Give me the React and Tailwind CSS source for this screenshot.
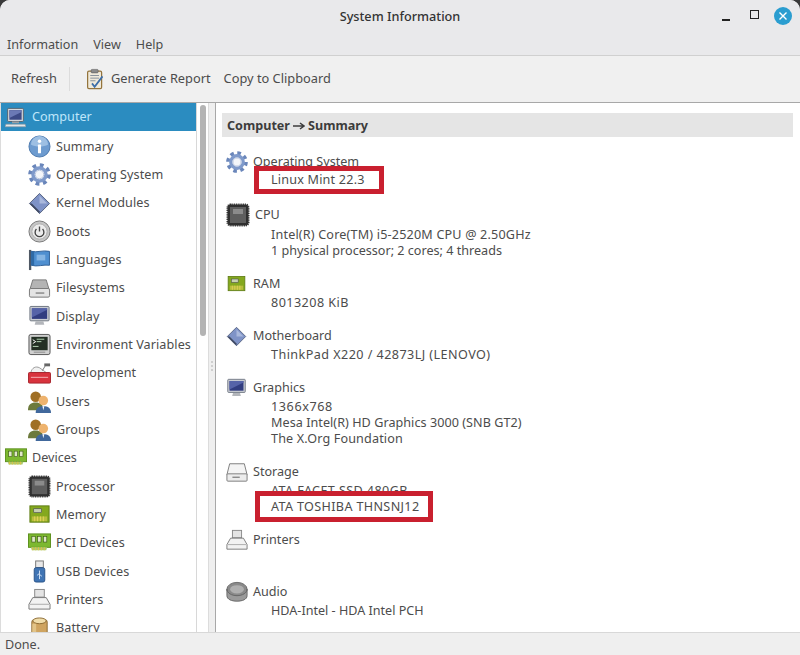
import React from 'react'

// small hand drawn hardware icons, all on a 24x24 box
const icons = {
  computer: (
    <>
      <rect x="3" y="1" width="18" height="15" rx="1" fill="#d5d8dc" stroke="#555d66" />
      <rect x="5" y="3" width="14" height="11" fill="#3d4a86" />
      <path d="M5 12 L19 5 V3 H5z" fill="#6b79b5" />
      <rect x="8" y="16" width="8" height="2" fill="#9aa0a6" />
      <path d="M1 19h22l1 3H0z" fill="#e4e6e8" stroke="#8a9097" strokeWidth=".7" />
    </>
  ),
  info: (
    <>
      <circle cx="12" cy="12" r="11" fill="#6d9bcf" stroke="#4b78ac" />
      <path d="M3 10a9 9 0 0 1 18 0c-5 3-13 3-18 0z" fill="#9dbfe3" />
      <circle cx="12" cy="6.5" r="1.8" fill="#fff" />
      <rect x="10.4" y="10" width="3.2" height="9" rx=".6" fill="#fff" />
    </>
  ),
  gear: (
    <>
      <circle cx="12" cy="12" r="9.8" fill="none" stroke="#6a86ba" strokeWidth="4" strokeDasharray="3.9 3.8" />
      <circle cx="12" cy="12" r="6.8" fill="none" stroke="#7f9acb" strokeWidth="3.6" />
      <circle cx="12" cy="12" r="4.4" fill="#f4f6fa" stroke="#b6c3dc" />
    </>
  ),
  kernel: (
    <>
      <path d="M12 1.5 L22.5 12 L12 22.5 L1.5 12z" fill="#7f93c7" stroke="#55617f" />
      <path d="M12 4 L20 12 L12 12z" fill="#a9b8dc" />
      <path d="M1.5 12 L12 22.5 L12 20 L4 12z" fill="#3f4a63" />
    </>
  ),
  boots: (
    <>
      <circle cx="12" cy="12" r="11" fill="#c6c6c6" stroke="#777" />
      <circle cx="12" cy="12" r="8" fill="#ececec" stroke="#aaa" />
      <path d="M8.8 9.5a4.6 4.6 0 1 0 6.4 0" fill="none" stroke="#444" strokeWidth="1.4" />
      <path d="M12 6.8v5.2" stroke="#444" strokeWidth="1.4" />
    </>
  ),
  flag: (
    <>
      <rect x="1" y="2" width="2.4" height="21" fill="#4f5864" />
      <path d="M3.4 3.5c6 1.5 12-1.5 19 0v14.5c-6-1-13 2-19 0z" fill="#4f8fd0" stroke="#2f5f96" />
      <path d="M3.4 3.5v14.5l3 .6V4z" fill="#2f6aa6" />
      <rect x="9" y="7" width="9" height="6" fill="#86b5e3" />
    </>
  ),
  disk: (
    <>
      <path d="M5 3h14l3 10H2z" fill="#b4b4b4" stroke="#777" />
      <rect x="1.5" y="12" width="21" height="9" rx="1.5" fill="#e4e4e4" stroke="#777" />
      <rect x="8" y="16" width="9" height="1.5" fill="#888" />
    </>
  ),
  display: (
    <>
      <rect x="2" y="1.5" width="20" height="15" rx="1" fill="#c9ccd2" stroke="#6d7480" />
      <rect x="4" y="3.5" width="16" height="11" fill="#323d80" />
      <path d="M4 13 L20 5 V3.5 H4z" fill="#5663a8" />
      <path d="M8 17h8l1 3.5H7z" fill="#b3b6bb" />
    </>
  ),
  terminal: (
    <>
      <rect x="1" y="1.5" width="22" height="21" rx="2" fill="#d0d0d0" stroke="#555" />
      <rect x="3.5" y="4" width="17" height="14" fill="#233024" />
      <path d="M5 7l3 2-3 2" fill="none" stroke="#fff" strokeWidth="1" />
      <path d="M9 6.5h8M9 9h5M5 14h6" stroke="#b8d8b8" strokeWidth="1" />
      <rect x="6" y="19.5" width="12" height="1" fill="#888" />
    </>
  ),
  dev: (
    <>
      <path d="M3 11c1-5 5-7 9-5l7 5z" fill="#f1f1f1" stroke="#999" />
      <rect x="17" y="1.5" width="6" height="3" fill="#666" />
      <path d="M18 4l-3 5" stroke="#777" />
      <rect x="0.5" y="11" width="23" height="11" rx="1" fill="#d8333d" stroke="#a7242c" />
      <path d="M3 16h18" stroke="#f6b4b8" />
    </>
  ),
  users: (
    <>
      <circle cx="8" cy="7" r="5.5" fill="#a06f24" />
      <path d="M0 21c0-6 3-8 8-8s8 2 8 8z" fill="#6c7a3c" />
      <circle cx="16" cy="11" r="5" fill="#eeb36e" />
      <path d="M8 24c0-5 3-7 8-7s8 2 8 7z" fill="#41689c" />
      <path d="M15 17h2l-1 4z" fill="#fff" />
    </>
  ),
  ram: (
    <>
      <rect x="0.5" y="2" width="23" height="14" fill="#7cb82f" stroke="#5b8f1c" />
      <rect x="4" y="4.5" width="3.6" height="6" fill="#dfe8c8" stroke="#3d5a17" strokeWidth=".7" />
      <rect x="10" y="4.5" width="3.6" height="6" fill="#dfe8c8" stroke="#3d5a17" strokeWidth=".7" />
      <rect x="16" y="4.5" width="3.6" height="6" fill="#dfe8c8" stroke="#3d5a17" strokeWidth=".7" />
      <path d="M3 16h17l-1 3H4z" fill="#a9c96a" />
      <path d="M5 16v3M8 16v3M11 16v3M14 16v3M17 16v3" stroke="#dcc04a" strokeWidth="1.2" />
    </>
  ),
  chip: (
    <>
      <rect x="1.5" y="1.5" width="21" height="21" rx="3" fill="#2f2f2f" stroke="#333" strokeDasharray="1 .8" strokeWidth="2" />
      <rect x="4" y="4" width="16" height="16" fill="#5e5e5e" />
      <rect x="7" y="6" width="10" height="5" fill="#8b8b8b" />
    </>
  ),
  memory: (
    <>
      <rect x="2" y="3" width="20" height="17" fill="#84a81e" stroke="#5f7c14" />
      <rect x="6" y="6" width="8" height="4" fill="#c7cfb0" stroke="#445" strokeWidth=".6" />
      <path d="M4 14h16v5H4z" fill="#b7bd3c" />
      <path d="M7 14v5M10 14v5M13 14v5M16 14v5" stroke="#e5d35a" />
    </>
  ),
  usb: (
    <>
      <rect x="8" y="1" width="8" height="7" fill="#e8e8e8" stroke="#777" />
      <rect x="6.5" y="8" width="11" height="15" rx="2" fill="#3f74b4" stroke="#2a5388" />
      <path d="M12 11v9M12 14l-2.5 2M12 15l2.5 2" stroke="#cfe0f3" />
    </>
  ),
  printer: (
    <>
      <rect x="7" y="1.5" width="10" height="8" fill="#e4e4e4" stroke="#888" />
      <path d="M5 10h14l4 7v5H1v-5z" fill="#f2f2f2" stroke="#777" />
      <path d="M2 17h20" stroke="#aaa" />
    </>
  ),
  battery: (
    <>
      <rect x="4" y="3" width="16" height="21" rx="2" fill="#cfa460" stroke="#8b6a32" />
      <ellipse cx="12" cy="4" rx="7" ry="3" fill="#f0ddaa" stroke="#8b6a32" />
      <rect x="4.5" y="7" width="4" height="17" fill="#e2c488" />
    </>
  ),
  storage: (
    <>
      <path d="M4 3h16l3 12H1z" fill="#f4f4f4" stroke="#777" />
      <rect x="1" y="14" width="22" height="8" rx="1" fill="#ececec" stroke="#777" />
      <rect x="7" y="17" width="8" height="1.5" fill="#888" />
    </>
  ),
  audio: (
    <>
      <ellipse cx="12" cy="9" rx="11" ry="7.5" fill="#8a8a8a" stroke="#666" />
      <ellipse cx="12" cy="9" rx="7.5" ry="4.5" fill="#b0b0b0" />
      <path d="M1 9v7c0 4 5 6 11 6s11-2 11-6V9c0 4-5 7-11 7S1 13 1 9z" fill="#9a9a9a" stroke="#666" />
    </>
  ),
  report: (
    <>
      <rect x="3" y="3" width="16" height="20" rx="1.5" fill="#efe9da" stroke="#94743c" strokeWidth="1.4" />
      <rect x="7" y="1" width="8" height="4" rx="1" fill="#8a8a8a" stroke="#555" strokeWidth=".6" />
      <path d="M6 8h10M6 11h10M6 14h6" stroke="#7d8794" />
      <path d="M8 17l3 4 9-12" fill="none" stroke="#3d6ea8" strokeWidth="2" />
    </>
  ),
}

function Icon({ name, className }) {
  return (
    <svg viewBox="0 0 24 24" className={className}>
      {icons[name]}
    </svg>
  )
}

const sidebar = [
  ['info', 'Summary'],
  ['gear', 'Operating System'],
  ['kernel', 'Kernel Modules'],
  ['boots', 'Boots'],
  ['flag', 'Languages'],
  ['disk', 'Filesystems'],
  ['display', 'Display'],
  ['terminal', 'Environment Variables'],
  ['dev', 'Development'],
  ['users', 'Users'],
  ['users', 'Groups'],
]

const deviceItems = [
  ['chip', 'Processor'],
  ['memory', 'Memory'],
  ['ram', 'PCI Devices'],
  ['usb', 'USB Devices'],
  ['printer', 'Printers'],
  ['battery', 'Battery'],
]

function TreeRow({ icon, label }) {
  return (
    <div className="flex h-[28.33px] shrink-0 items-center pl-[27px]">
      <Icon name={icon} className="h-[23px] w-[23px] shrink-0" />
      <span className="ml-[5px] whitespace-nowrap pt-px tracking-[0.08px]">{label}</span>
    </div>
  )
}

function Section({ icon, title, extra, children, iconClass = 'h-[22px] w-[22px]', tight }) {
  return (
    <div className={tight ? 'mb-[17px]' : 'mb-[15px]'}>
      <div className={tight ? 'flex h-[20px] items-center' : 'mb-px flex h-[20px] items-center'}>
        <div className="flex w-[27px] shrink-0 justify-start">
          <Icon name={icon} className={iconClass} />
        </div>
        <span className={extra}>{title}</span>
      </div>
      <div className="flex flex-col pl-[45px] leading-[16px]">{children}</div>
    </div>
  )
}

function Value({ children, className = '' }) {
  return <div className={`h-[16px] whitespace-nowrap ${className}`}>{children}</div>
}

export default function App() {
  return (
    <div className="h-[655px] w-[800px] overflow-hidden bg-[#3a3a3a] font-['Noto_Sans',sans-serif] text-[12.6px] text-[#4c4c4c]">
      <div className="flex h-full flex-col overflow-hidden rounded-t-[10px] bg-[#efefef]">
        {/* title bar + menu */}
        <div className="h-[56px] shrink-0 border-b border-[#d0d0d0] bg-[#e9e9eb]">
          <div className="relative flex h-[33px] items-center justify-center">
            <span className="text-[12.7px] font-medium text-[#333]">System Information</span>
            <div className="absolute right-[8px] top-[7px] flex items-center">
              <div className="mt-[8px] mr-[20px] h-[2px] w-[8px] bg-[#222]" />
              <div className="mr-[15px] mb-[4px] h-[9px] w-[9px] border border-[#222]" />
              <div className="flex h-[18px] w-[18px] items-center justify-center rounded-full bg-[#2a9dd0]">
                <svg viewBox="0 0 10 10" className="h-[10px] w-[10px]">
                  <path d="M1.5 1.5l7 7M8.5 1.5l-7 7" stroke="#fff" strokeWidth="1.4" />
                </svg>
              </div>
            </div>
          </div>
          <div className="flex h-[22px] items-center pl-[7px] pt-[2px]">
            <span className="mr-[15px]">Information</span>
            <span className="mr-[15px]">View</span>
            <span>Help</span>
          </div>
        </div>

        {/* toolbar */}
        <div className="flex h-[47px] shrink-0 items-center border-b border-[#a8a8a8] bg-[#f0f0f0] pl-[11px] text-[12.8px]">
          <span>Refresh</span>
          <div className="ml-[12px] h-[24px] w-px bg-[#dcdcdc]" />
          <Icon name="report" className="ml-[15px] h-[24px] w-[21px]" />
          <span className="ml-[5px]">Generate Report</span>
          <span className="ml-[13px]">Copy to Clipboard</span>
        </div>

        {/* panes */}
        <div className="flex min-h-0 flex-1">
          <div className="flex w-[209px] shrink-0 border-l border-r border-[#dcdcdc] bg-white">
            <div className="min-h-0 w-[196px] shrink-0 overflow-hidden border-r border-[#d8d8d8]">
              <div className="flex h-[28px] items-center bg-[#2b8cc0] pl-[4px] pt-px text-[#bfe6fa]">
                <Icon name="computer" className="h-[22px] w-[21px] shrink-0" />
                <span className="ml-[6px]">Computer</span>
              </div>
              <div className="pt-[1.5px]">
                {sidebar.map(([icon, label]) => (
                  <TreeRow key={label} icon={icon} label={label} />
                ))}
                <div className="flex h-[28.33px] items-center pl-[4px]">
                  <Icon name="ram" className="h-[22px] w-[22px] shrink-0" />
                  <span className="ml-[5px] pt-px">Devices</span>
                </div>
                {deviceItems.map(([icon, label]) => (
                  <TreeRow key={label} icon={icon} label={label} />
                ))}
              </div>
            </div>
            <div className="flex-1 pl-[3px] pt-[2px]">
              <div className="h-[231px] w-[6px] rounded-full bg-[#b4b4b4]" />
            </div>
          </div>

          {/* pane handle */}
          <div className="flex w-[6px] shrink-0 flex-col items-center justify-center gap-[2px] pb-[4px]">
            <div className="h-[2px] w-[2px] rounded-full bg-[#c4c4c4]" />
            <div className="h-[2px] w-[2px] rounded-full bg-[#c4c4c4]" />
            <div className="h-[2px] w-[2px] rounded-full bg-[#c4c4c4]" />
          </div>

          <div className="min-h-0 flex-1 overflow-hidden border-l border-[#a8a8a8] bg-white pl-[6px] pr-[7px] pt-[10px]">
            <div className="flex h-[24px] items-center bg-[#e5e5e5] pl-[5px] pt-[2px] font-bold text-[#3c3c3c]">
              Computer
              <svg viewBox="0 0 12 8" className="mx-[3px] h-[8px] w-[12px]">
                <path d="M0 4h10M7 1l4 3-4 3" fill="none" stroke="#3c3c3c" strokeWidth="1.5" />
              </svg>
              Summary
            </div>
            <div className="pl-[4px] pt-[15px]">
              <Section icon="gear" title="Operating System" tight>
                <div className="relative">
                  <Value className="tracking-[0.2px]">Linux Mint 22.3</Value>
                  <div className="absolute left-[-17px] top-[-6px] h-[28px] w-[130px] border-[5px] border-[#c9202f]" />
                </div>
              </Section>
              <Section icon="chip" title="CPU" extra="ml-[2px]" iconClass="h-[24px] w-[24px]">
                <div className="h-px" />
                <Value className="tracking-[0.18px]">Intel(R) Core(TM) i5-2520M CPU @ 2.50GHz</Value>
                <Value>1 physical processor; 2 cores; 4 threads</Value>
              </Section>
              <Section icon="memory" title="RAM" iconClass="h-[20px] w-[21px]">
                <Value className="tracking-[0.45px]">8013208 KiB</Value>
              </Section>
              <Section icon="kernel" title="Motherboard" iconClass="h-[21px] w-[21px]">
                <Value className="tracking-[0.44px]">ThinkPad X220 / 42873LJ (LENOVO)</Value>
              </Section>
              <Section icon="display" title="Graphics" iconClass="h-[21px] w-[21px]">
                <Value className="tracking-[0.6px]">1366x768</Value>
                <Value className="tracking-[0.05px]">Mesa Intel(R) HD Graphics 3000 (SNB GT2)</Value>
                <Value className="tracking-[0.15px]">The X.Org Foundation</Value>
              </Section>
              <Section icon="storage" title="Storage">
                <Value className="tracking-[0.4px]">ATA FACET SSD 480GB</Value>
                <div className="relative">
                  <Value className="tracking-[0.35px]">ATA TOSHIBA THNSNJ12</Value>
                  <div className="absolute left-[-16px] top-[-8px] h-[31px] w-[178px] border-[5px] border-[#c9202f]" />
                </div>
              </Section>
              <Section icon="printer" title="Printers">
                <Value />
              </Section>
              <Section icon="audio" title="Audio">
                <Value>HDA-Intel - HDA Intel PCH</Value>
              </Section>
            </div>
          </div>
        </div>

        {/* status bar */}
        <div className="flex h-[23px] shrink-0 items-center border-t border-[#d8d8d8] pl-[5px] pt-[2px]">Done.</div>
      </div>
    </div>
  )
}
